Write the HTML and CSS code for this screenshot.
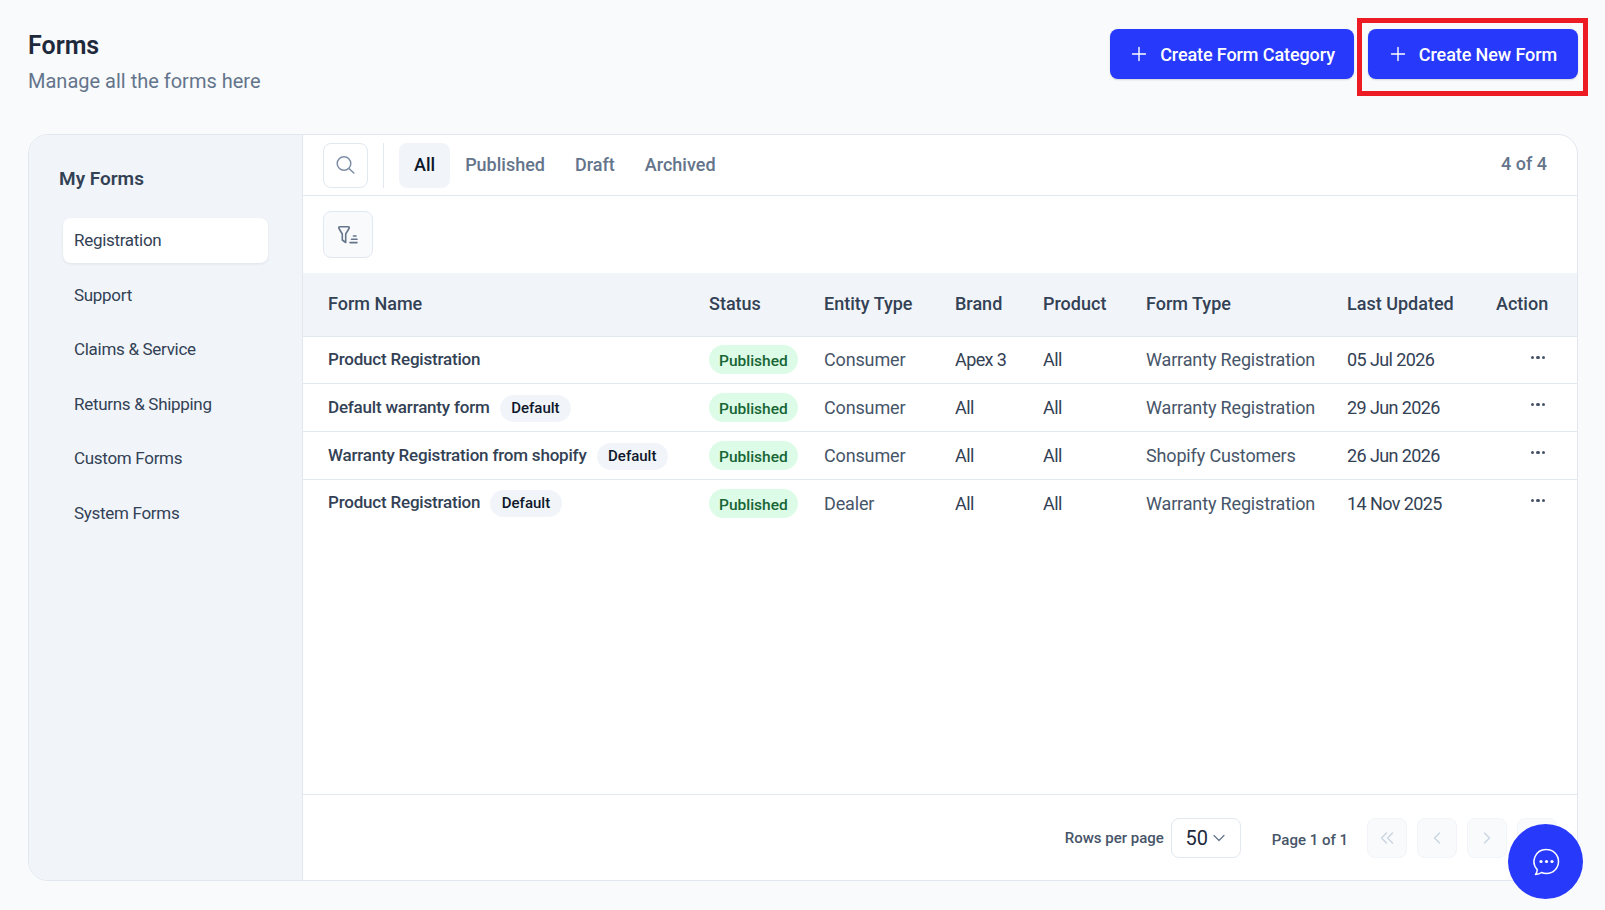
FILE: index.html
```html
<!DOCTYPE html>
<html lang="en">
<head>
    <meta charset="UTF-8">
    <meta name="viewport" content="width=device-width, initial-scale=1.0">
    <title>Forms</title>
    <link rel="stylesheet" href="styles.css">
</head>
<body>

<div class="page">
    <header class="page-header">
        <div class="page-title">
            <h1>Forms</h1>
            <p>Manage all the forms here</p>
        </div>
        <div class="page-actions">
            <button class="btn-primary">
                <svg width="16" height="16" viewBox="0 0 16 16" fill="none" stroke="#fff" stroke-width="1.4" stroke-linecap="round"><path d="M8 1.5v13M1.5 8h13"/></svg>
                Create Form Category
            </button>
            <button class="btn-primary btn-new">
                <svg width="16" height="16" viewBox="0 0 16 16" fill="none" stroke="#fff" stroke-width="1.4" stroke-linecap="round"><path d="M8 1.5v13M1.5 8h13"/></svg>
                Create New Form
            </button>
        </div>
    </header>

    <div class="card">
        <aside class="sidebar">
            <h2>My Forms</h2>
            <ul class="side-list">
                <li class="active">Registration</li>
                <li>Support</li>
                <li>Claims &amp; Service</li>
                <li>Returns &amp; Shipping</li>
                <li>Custom Forms</li>
                <li>System Forms</li>
            </ul>
        </aside>

        <main class="main">
            <div class="toolbar">
                <button class="search-btn">
                    <svg width="20" height="20" viewBox="0 0 20 20" fill="none" stroke="#7c8ea5" stroke-width="1.5" stroke-linecap="round"><circle cx="8" cy="8.500" r="6.800"/><path d="M13 13.500l4.800 4.500"/></svg>
                </button>
                <span class="divider"></span>
                <div class="tabs">
                    <span class="tab active">All</span>
                    <span class="tab">Published</span>
                    <span class="tab">Draft</span>
                    <span class="tab">Archived</span>
                </div>
                <span class="count">4 of 4</span>
            </div>

            <div class="filter-row">
                <button class="filter-btn">
                    <svg width="22" height="22" viewBox="0 0 22 22" fill="none" stroke="#64748b" stroke-width="1.6" stroke-linecap="round" stroke-linejoin="round"><path d="M3 2.800H11Q12.800 2.800 12 4.500L8.700 10V18.500L5.300 16V10L2 4.500Q1.200 2.800 3 2.800Z"/><path d="M16.500 12h2.500M14.500 15.300h5.500M13 18.600h7"/></svg>
                </button>
            </div>

            <div class="table-wrap">
                <table class="forms-table">
                    <colgroup>
                        <col class="col-name">
                        <col class="col-status">
                        <col class="col-entity">
                        <col class="col-brand">
                        <col class="col-product">
                        <col class="col-type">
                        <col class="col-updated">
                        <col class="col-action">
                    </colgroup>
                    <thead>
                        <tr>
                            <th>Form Name</th>
                            <th>Status</th>
                            <th>Entity Type</th>
                            <th>Brand</th>
                            <th>Product</th>
                            <th>Form Type</th>
                            <th>Last Updated</th>
                            <th>Action</th>
                        </tr>
                    </thead>
                    <tbody>
                        <tr>
                            <td class="name">Product Registration</td>
                            <td><span class="pill">Published</span></td>
                            <td class="roomy">Consumer</td>
                            <td>Apex 3</td>
                            <td>All</td>
                            <td class="roomy">Warranty Registration</td>
                            <td>05 Jul 2026</td>
                            <td class="more"><span></span><span></span><span></span></td>
                        </tr>
                        <tr>
                            <td class="name">Default warranty form <span class="badge">Default</span></td>
                            <td><span class="pill">Published</span></td>
                            <td class="roomy">Consumer</td>
                            <td>All</td>
                            <td>All</td>
                            <td class="roomy">Warranty Registration</td>
                            <td>29 Jun 2026</td>
                            <td class="more"><span></span><span></span><span></span></td>
                        </tr>
                        <tr>
                            <td class="name">Warranty Registration from shopify <span class="badge">Default</span></td>
                            <td><span class="pill">Published</span></td>
                            <td class="roomy">Consumer</td>
                            <td>All</td>
                            <td>All</td>
                            <td class="roomy">Shopify Customers</td>
                            <td>26 Jun 2026</td>
                            <td class="more"><span></span><span></span><span></span></td>
                        </tr>
                        <tr>
                            <td class="name">Product Registration <span class="badge">Default</span></td>
                            <td><span class="pill">Published</span></td>
                            <td class="roomy">Dealer</td>
                            <td>All</td>
                            <td>All</td>
                            <td class="roomy">Warranty Registration</td>
                            <td>14 Nov 2025</td>
                            <td class="more"><span></span><span></span><span></span></td>
                        </tr>
                    </tbody>
                </table>
            </div>

            <footer class="pager">
                <span class="rows-label">Rows per page</span>
                <div class="rows-select">
                    50
                    <svg width="14" height="14" viewBox="0 0 14 14" fill="none" stroke="#64748b" stroke-width="1.2" stroke-linecap="round" stroke-linejoin="round"><path d="M2 4.500l5 5 5-5"/></svg>
                </div>
                <span class="page-label">Page <b>1</b> of <b>1</b></span>
                <div class="page-btns">
                    <button><svg width="16" height="16" viewBox="0 0 16 16" fill="none" stroke="#cbd5e1" stroke-width="1.4" stroke-linecap="round" stroke-linejoin="round"><path d="M7.500 3L2.500 8l5 5M13.500 3l-5 5 5 5"/></svg></button>
                    <button><svg width="16" height="16" viewBox="0 0 16 16" fill="none" stroke="#cbd5e1" stroke-width="1.4" stroke-linecap="round" stroke-linejoin="round"><path d="M10.500 3L5.500 8l5 5"/></svg></button>
                    <button><svg width="16" height="16" viewBox="0 0 16 16" fill="none" stroke="#cbd5e1" stroke-width="1.4" stroke-linecap="round" stroke-linejoin="round"><path d="M5.500 3l5 5-5 5"/></svg></button>
                    <button><svg width="16" height="16" viewBox="0 0 16 16" fill="none" stroke="#cbd5e1" stroke-width="1.4" stroke-linecap="round" stroke-linejoin="round"><path d="M2.500 3l5 5-5 5M8.500 3l5 5-5 5"/></svg></button>
                </div>
            </footer>
        </main>
    </div>
</div>

<div class="highlight"></div>

<button class="chat-btn">
    <svg width="28" height="28" viewBox="0 0 28 28" fill="none"><path d="M14.500 1.500a12 12 0 0 1 0 24c-1.800 0-3.400-.3-5-1-1.600 1.200-3.500 1.800-6 1.900 1-1.200 1.700-2.800 1.800-4.700A12 12 0 0 1 14.500 1.500z" stroke="#fff" stroke-width="1.500" stroke-linejoin="round"/><circle cx="9" cy="13.500" r="1.600" fill="#fff"/><circle cx="14.500" cy="13.500" r="1.600" fill="#fff"/><circle cx="20" cy="13.500" r="1.600" fill="#fff"/></svg>
</button>

</body>
</html>
```

FILE: styles.css
```css
* {
    box-sizing: border-box;
}
body {
    margin: 0;
    height: 910px;
    overflow: hidden;
    font-family: Roboto, "Liberation Sans", sans-serif;
    background-color: #f8fafc;
    color: #334155;
}
button {
    font-family: inherit;
    cursor: pointer;
}
.page {
    display: flex;
    flex-direction: column;
    height: 100%;
    padding: 29px 27px 29px 28px;
}
.page-header {
    display: flex;
    justify-content: space-between;
    align-items: flex-start;
    height: 105px;
}
.page-title h1 {
    margin: 2px 0 0;
    font-size: 25px;
    line-height: 30px;
    font-weight: 600;
    color: #1e293b;
}
.page-title p {
    margin: 7px 0 0;
    font-size: 20px;
    line-height: 26px;
    color: #64748b;
}
.page-actions {
    display: flex;
    gap: 14px;
}
.btn-primary {
    display: flex;
    align-items: center;
    gap: 13px;
    height: 50px;
    padding: 0 19px 0 21px;
    border: none;
    border-radius: 8px;
    background-color: #2739fb;
    color: #fff;
    font-size: 18px;
    font-weight: 500;
    letter-spacing: -0.1px;
    box-shadow: 0 1px 2px rgba(0, 0, 0, 0.15);
}
.btn-new {
    padding: 0 21px 0 22px;
}
.card {
    flex: 1;
    display: flex;
    min-height: 0;
    border: 1px solid #e2e8f0;
    border-radius: 20px;
    overflow: hidden;
    background-color: #fff;
}
.sidebar {
    width: 274px;
    flex-shrink: 0;
    padding: 31px 34px 0 30px;
    background-color: #f1f5f9;
    border-right: 1px solid #e2e8f0;
}
.sidebar h2 {
    margin: 0 0 26px;
    font-size: 19px;
    line-height: 26px;
    font-weight: 600;
    color: #334155;
}
.side-list {
    list-style: none;
    margin: 0 0 0 4px;
    padding: 0;
    display: flex;
    flex-direction: column;
    gap: 9.6px;
}
.side-list li {
    height: 45px;
    line-height: 45px;
    padding-left: 11px;
    border-radius: 8px;
    font-size: 17px;
    letter-spacing: -0.3px;
}
.side-list li.active {
    background-color: #fff;
    box-shadow: 0 1px 3px rgba(15, 23, 42, 0.08);
}
.main {
    flex: 1;
    min-width: 0;
    display: flex;
    flex-direction: column;
}
.toolbar {
    display: flex;
    align-items: center;
    height: 61px;
    padding: 0 30px 0 20px;
    border-bottom: 1px solid #e2e8f0;
}
.search-btn {
    display: flex;
    align-items: center;
    justify-content: center;
    width: 45px;
    height: 45px;
    padding: 0;
    border: 1px solid #e2e8f0;
    border-radius: 8px;
    background-color: #fff;
}
.divider {
    width: 1px;
    height: 45px;
    margin: 0 15px 0 15px;
    background-color: #e2e8f0;
}
.tabs {
    display: flex;
    align-items: center;
    flex: 1;
    gap: 0;
}
.tab {
    height: 45px;
    line-height: 43px;
    padding: 0 15px;
    border-radius: 8px;
    font-size: 18px;
    font-weight: 500;
    color: #64748b;
}
.tab.active {
    background-color: #f1f5f9;
    color: #0f172a;
}
.count {
    margin-bottom: 3px;
    font-size: 18px;
    font-weight: 500;
    color: #64748b;
}
.filter-row {
    height: 77px;
    padding: 15px 20px 0;
}
.filter-btn {
    display: flex;
    align-items: center;
    justify-content: center;
    width: 50px;
    height: 47px;
    padding: 0;
    border: 1px solid #e2e8f0;
    border-radius: 8px;
    background-color: #f8fafc;
}
.table-wrap {
    flex: 1;
    min-height: 0;
}
.forms-table {
    width: 100%;
    table-layout: fixed;
    border-collapse: collapse;
}
.col-name { width: 406px; }
.col-status { width: 115px; }
.col-entity { width: 131px; }
.col-brand { width: 88px; }
.col-product { width: 103px; }
.col-type { width: 201px; }
.col-updated { width: 149px; }
.forms-table th {
    height: 63px;
    padding: 0 0 2px;
    text-align: left;
    font-size: 18px;
    font-weight: 500;
    color: #334155;
    background-color: #f1f5f9;
    border-bottom: 1px solid #e2e8f0;
}
.forms-table th:first-child,
.forms-table td:first-child {
    padding-left: 25px;
}
.forms-table th:last-child {
    padding-right: 33px;
    text-align: right;
}
.forms-table td {
    height: 48px;
    padding: 0;
    font-size: 18px;
    letter-spacing: -0.6px;
    white-space: nowrap;
    border-bottom: 1px solid #e2e8f0;
}
.forms-table tbody tr:first-child td {
    height: 47px;
}
.forms-table tbody tr:last-child td {
    border-bottom: none;
}
.forms-table td.roomy {
    letter-spacing: -0.15px;
    color: #475569;
}
.forms-table td.name {
    font-size: 17px;
    font-weight: 500;
    letter-spacing: -0.2px;
}
.forms-table tbody tr:first-child td.name {
    padding-bottom: 2px;
}
.forms-table tbody tr:nth-child(2) td.name,
.forms-table tbody tr:nth-child(3) td.name {
    padding-top: 2px;
}
.pill {
    display: inline-block;
    height: 29px;
    line-height: 33px;
    padding: 0 10px;
    border-radius: 15px;
    background-color: #dcfce7;
    color: #166534;
    font-size: 15.5px;
    font-weight: 500;
    letter-spacing: 0;
    vertical-align: middle;
}
.badge {
    display: inline-block;
    height: 27px;
    line-height: 27px;
    margin-left: 6px;
    padding: 0 11.5px;
    border-radius: 14px;
    background-color: #f1f5f9;
    color: #0f172a;
    font-size: 15px;
    font-weight: 500;
    letter-spacing: 0;
    vertical-align: middle;
}
.forms-table td.more {
    padding-right: 32px;
    text-align: right;
    font-size: 0;
    vertical-align: top;
    padding-top: 19px;
}
.more span {
    display: inline-block;
    width: 3.500px;
    height: 3.500px;
    margin-left: 2px;
    border-radius: 50%;
    background-color: #475569;
}
.pager {
    display: flex;
    align-items: center;
    height: 86px;
    padding: 0 20px 0 0;
    justify-content: flex-end;
    border-top: 1px solid #e2e8f0;
}
.rows-label {
    font-size: 15px;
    font-weight: 500;
    color: #475569;
}
.rows-select {
    display: flex;
    align-items: center;
    justify-content: center;
    gap: 4px;
    width: 70px;
    height: 40px;
    margin-left: 7px;
    border: 1px solid #e2e8f0;
    border-radius: 8px;
    font-size: 20px;
    color: #1e293b;
}
.page-label {
    margin: 4px 0 0 31px;
    font-size: 15px;
    font-weight: 500;
    color: #475569;
}
.page-label b {
    font-weight: 500;
}
.page-btns {
    display: flex;
    gap: 10px;
    margin-left: 19px;
}
.page-btns button {
    display: flex;
    align-items: center;
    justify-content: center;
    width: 40px;
    height: 40px;
    padding: 0;
    border: 1px solid #f1f5f9;
    border-radius: 8px;
    background-color: #f8fafc;
}
.highlight {
    position: absolute;
    left: 1357px;
    top: 18px;
    width: 231px;
    height: 78px;
    border: 5px solid #ed1c24;
}
.chat-btn {
    position: absolute;
    left: 1508px;
    top: 824px;
    width: 75px;
    height: 75px;
    display: flex;
    align-items: center;
    justify-content: center;
    padding: 0;
    border: none;
    border-radius: 50%;
    background-color: #2739fb;
}
```
